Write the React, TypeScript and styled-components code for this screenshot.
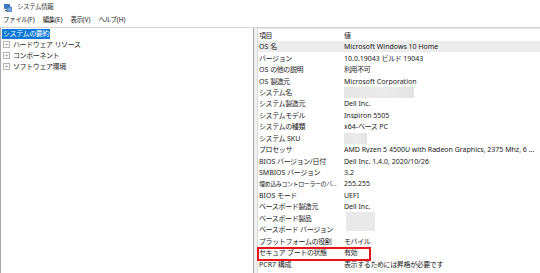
import React from "react";
import styled, { createGlobalStyle } from "styled-components";

const GlobalStyle = createGlobalStyle`
  html, body {
    margin: 0;
    padding: 0;
    background: #ffffff;
  }
  body {
    font-family: "Noto Sans", "Noto Sans CJK JP", sans-serif;
    font-size: 7px;
    line-height: 1;
    color: #1b1b1b;
  }
`;

type Row = {
  item: string;
  value?: string;
  blank?: number;
  selected?: boolean;
  marked?: boolean;
  squeeze?: boolean;
};

const rows: Row[] = [
  { item: "OS 名", value: "Microsoft Windows 10 Home", selected: true },
  { item: "バージョン", value: "10.0.19043 ビルド 19043" },
  { item: "OS の他の説明", value: "利用不可" },
  { item: "OS 製造元", value: "Microsoft Corporation" },
  { item: "システム名", blank: 70 },
  { item: "システム製造元", value: "Dell Inc." },
  { item: "システムモデル", value: "Inspiron 5505" },
  { item: "システムの種類", value: "x64-ベース PC" },
  { item: "システム SKU", blank: 23 },
  { item: "プロセッサ", value: "AMD Ryzen 5 4500U with Radeon Graphics, 2375 Mhz, 6 ..." },
  { item: "BIOS バージョン/日付", value: "Dell Inc. 1.4.0, 2020/10/26" },
  { item: "SMBIOS バージョン", value: "3.2" },
  { item: "埋め込みコントローラーのバ...", value: "255.255", squeeze: true },
  { item: "BIOS モード", value: "UEFI" },
  { item: "ベースボード製造元", value: "Dell Inc." },
  { item: "ベースボード製品", blank: -1 },
  { item: "ベースボード バージョン" },
  { item: "プラットフォームの役割", value: "モバイル" },
  { item: "セキュア ブートの状態", value: "有効", marked: true },
  { item: "PCR7 構成", value: "表示するためには昇格が必要です" },
];

// Meiryo UI is narrower than Noto's CJK glyphs, so Japanese runs get tightened
const Txt = ({ text }: { text?: string }) => {
  if (!text) return null;
  const parts = text.split(/([\u3000-\u30ff\u4e00-\u9fff\uff00-\uffef]+)/);
  return (
    <span>
      {parts.map((p, i) => (i % 2 === 1 ? <Jp key={i}>{p}</Jp> : <React.Fragment key={i}>{p}</React.Fragment>))}
    </span>
  );
};

const App = () => {
  return (
    <Window>
      <GlobalStyle />
      <TitleBar>
        <AppIcon width="8" height="8" viewBox="0 0 8 8">
          <rect x="0.5" y="0.5" width="5" height="4" fill="#3a7bd5" stroke="#1f4f99" strokeWidth="0.6" />
          <rect x="3" y="3" width="4.5" height="4.5" fill="#6fa8e8" stroke="#1f4f99" strokeWidth="0.6" />
          <rect x="1" y="6" width="2" height="1.2" fill="#555" />
        </AppIcon>
        <Txt text="システム情報" />
      </TitleBar>
      <MenuBar>
        {["ファイル(F)", "編集(E)", "表示(V)", "ヘルプ(H)"].map((m) => (
          <MenuItem key={m}>
            <Txt text={m} />
          </MenuItem>
        ))}
      </MenuBar>
      <Main>
        <TreePane>
          <TreeItem $root>
            <Selected>
              <Txt text="システムの要約" />
            </Selected>
          </TreeItem>
          {["ハードウェア リソース", "コンポーネント", "ソフトウェア環境"].map((t) => (
            <TreeItem key={t}>
              <Expander>+</Expander>
              <Txt text={t} />
            </TreeItem>
          ))}
        </TreePane>
        <Splitter />
        <ListPane>
          <HeaderRow>
            <ItemCell>
              <Txt text="項目" />
            </ItemCell>
            <ValueCell>
              <Txt text="値" />
            </ValueCell>
          </HeaderRow>
          {rows.map((r) => (
            <DataRow key={r.item} $selected={r.selected} $marked={r.marked}>
              <ItemCell $squeeze={r.squeeze}>
                <Txt text={r.item} />
              </ItemCell>
              <ValueCell>
                <Txt text={r.value} />
                {r.blank && r.blank > 0 ? <Blur style={{ width: r.blank }} /> : null}
              </ValueCell>
              {r.blank === -1 ? <BigBlur /> : null}
            </DataRow>
          ))}
        </ListPane>
      </Main>
    </Window>
  );
};

export default App;

const Window = styled.div`
  width: 540px;
  height: 273px;
  display: flex;
  flex-direction: column;
  overflow: hidden;
  background: #ffffff;
`;

const Jp = styled.span`
  letter-spacing: -0.4px;
`;

const TitleBar = styled.div`
  height: 14px;
  flex-shrink: 0;
  display: flex;
  align-items: center;
  gap: 5px;
  padding-left: 4px;
  padding-top: 1px;
  box-sizing: border-box;
  font-size: 6.5px;
  color: #333;
`;

const AppIcon = styled.svg`
  display: block;
`;

const MenuBar = styled.div`
  height: 12px;
  flex-shrink: 0;
  display: flex;
  align-items: center;
  padding-left: 3px;
  gap: 8px;
  font-size: 6.5px;
`;

const MenuItem = styled.span`
  color: #222;
`;

const Main = styled.div`
  flex: 1;
  min-height: 0;
  display: flex;
  margin-top: 1px;
  border-top: 1px solid #d4d4d4;
`;

const TreePane = styled.div`
  width: 252px;
  flex-shrink: 0;
  border-left: 1px solid #a8a8a8;
  border-right: 1px solid #a8a8a8;
  display: flex;
  flex-direction: column;
`;

const TreeItem = styled.div<{ $root?: boolean }>`
  height: 11px;
  display: flex;
  align-items: center;
  gap: 3px;
  padding-left: ${({ $root }) => ($root ? "1px" : "2px")};
  white-space: nowrap;
`;

const Selected = styled.span`
  background: #0a78d7;
  color: #ffffff;
  padding: 0 1px;
  height: 10px;
  line-height: 10px;
`;

const Expander = styled.span`
  width: 5px;
  height: 5px;
  border: 1px solid #b5b5b5;
  color: #888;
  font-size: 5px;
  line-height: 5px;
  text-align: center;
  font-family: "DejaVu Sans", sans-serif;
`;

const Splitter = styled.div`
  width: 3px;
  flex-shrink: 0;
  background: #f0f0f0;
  border-right: 1px solid #d9d9d9;
`;

const ListPane = styled.div`
  flex: 1;
  min-width: 0;
  display: flex;
  flex-direction: column;
`;

const HeaderRow = styled.div`
  height: 12px;
  flex-shrink: 0;
  display: flex;
  align-items: center;
  border-top: 1px solid #e4e4e4;
`;

const DataRow = styled.div<{ $selected?: boolean; $marked?: boolean }>`
  position: relative;
  height: 11.45px;
  flex-shrink: 0;
  display: flex;
  align-items: center;
  background: ${({ $selected }) => ($selected ? "#ececec" : "transparent")};

  &::after {
    content: "";
    display: ${({ $marked }) => ($marked ? "block" : "none")};
    position: absolute;
    left: -1px;
    top: 0;
    width: 110px;
    height: 10px;
    border: 2px solid #e8141b;
  }
`;

const ItemCell = styled.div<{ $squeeze?: boolean }>`
  width: 83px;
  margin-right: 2px;
  flex-shrink: 0;
  padding-left: 1px;
  white-space: nowrap;
  overflow: hidden;
  font-size: ${({ $squeeze }) => ($squeeze ? "6px" : "7px")};
`;

const ValueCell = styled.div`
  flex: 1;
  min-width: 0;
  white-space: nowrap;
  overflow: hidden;
  display: flex;
  align-items: center;
`;

const Blur = styled.span`
  display: block;
  height: 11px;
  background: linear-gradient(90deg, #e6e6e6, #ebebeb 60%, #e3e3e3);
`;

const BigBlur = styled.span`
  position: absolute;
  left: 88px;
  top: -1px;
  width: 29px;
  height: 19px;
  background: #e9e9e9;
`;
